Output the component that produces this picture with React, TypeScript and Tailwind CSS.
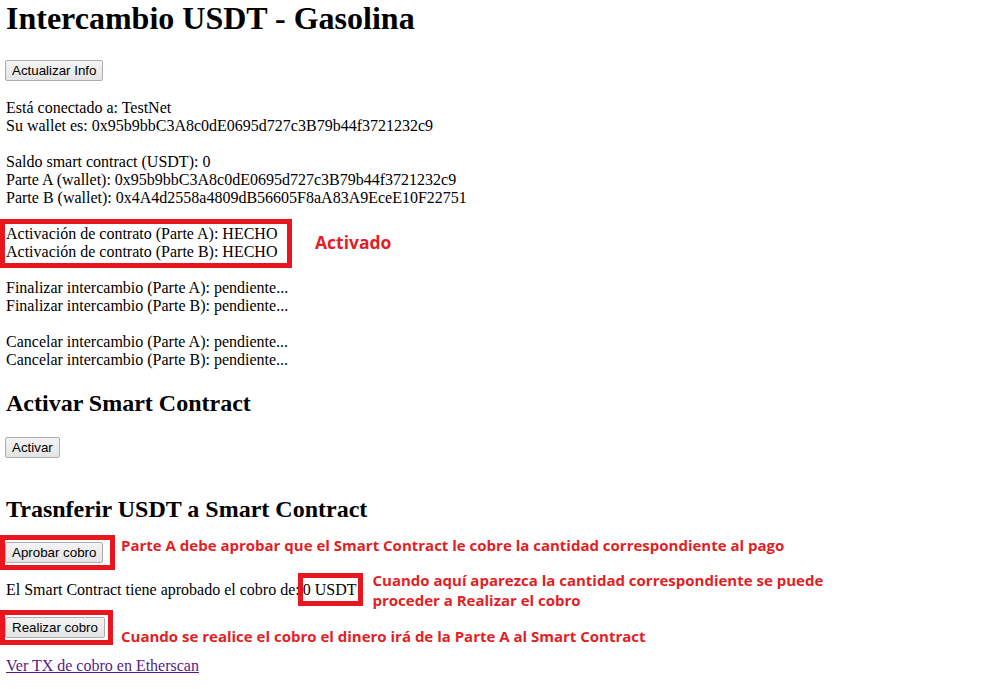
import React from 'react'

const btn =
  "h-[21px] px-[6px] border border-[#adadad] rounded-[2px] bg-gradient-to-b from-[#f4f4f4] to-[#e4e4e4] font-['Liberation_Sans',Arial,sans-serif] text-[13.33px] leading-[15px] text-black"

const note = "font-['Open_Sans',sans-serif] font-bold text-[15px] leading-[20px] text-[#e31e24] whitespace-nowrap"
const red = 'border-[5px] border-[#e8161f]'

export default function App() {
  return (
    <div className="flex w-[985px] min-h-[689px] flex-col items-start bg-white pl-[5px] text-black font-['Liberation_Serif','Times_New_Roman',serif] text-[16px] leading-[18px]">
      <h1 className="pl-px text-[32px] font-bold leading-[37px]">Intercambio USDT - Gasolina</h1>

      <button className={`${btn} mt-[23px]`}>Actualizar Info</button>

      <div className="mt-[18px] pl-px">
        Está conectado a: TestNet
        <br />
        Su wallet es: 0x95b9bbC3A8c0dE0695d727c3B79b44f3721232c9
        <br />
        <br />
        Saldo smart contract (USDT): 0
        <br />
        Parte A (wallet): 0x95b9bbC3A8c0dE0695d727c3B79b44f3721232c9
        <br />
        Parte B (wallet): 0x4A4d2558a4809dB56605F8aA83A9EceE10F22751
      </div>

      {/* Activado */}
      <div className="mt-[12px] -ml-[5px] flex items-center">
        <div className={`${red} w-[292px] pl-px pt-px pb-[2px]`}>
          Activación de contrato (Parte A): HECHO
          <br />
          Activación de contrato (Parte B): HECHO
        </div>
        <div className={`${note} ml-[23px] -mt-[3px] text-[17.5px]`}>Activado</div>
      </div>

      <div className="mt-[11px] pl-px">
        Finalizar intercambio (Parte A): pendiente...
        <br />
        Finalizar intercambio (Parte B): pendiente...
        <br />
        <br />
        Cancelar intercambio (Parte A): pendiente...
        <br />
        Cancelar intercambio (Parte B): pendiente...
      </div>

      <h2 className="mt-[20px] pl-px text-[24px] font-bold leading-[28px]">Activar Smart Contract</h2>
      <button className={`${btn} mt-[20px]`}>Activar</button>

      <h2 className="mt-[37px] pl-px text-[24px] font-bold leading-[28px]">Trasnferir USDT a Smart Contract</h2>

      {/* Aprobar cobro */}
      <div className="mt-[12px] -ml-[5px] flex items-start">
        <div className={`${red} w-[115px] py-[2px]`}>
          <button className={btn}>Aprobar cobro</button>
        </div>
        <div className={`${note} ml-[6px]`}>
          Parte A debe aprobar que el Smart Contract le cobre la cantidad correspondiente al pago
        </div>
      </div>

      <div className="flex items-start">
        <div className="mt-[11px] pl-px">
          El Smart Contract tiene aprobado el cobro de:
          <span className={`${red} -ml-[2px] inline-block pr-[2px] pt-[3px] pb-[2px] -my-[8px] leading-[18px]`}>0 USDT</span>
        </div>
        <div className={`${note} ml-[9px]`}>
          Cuando aquí aparezca la cantidad correspondiente se puede
          <br />
          proceder a Realizar el cobro
        </div>
      </div>

      {/* Realizar cobro */}
      <div className="-ml-[5px] flex items-start">
        <div className={`${red} w-[113px] py-[2px]`}>
          <button className={btn}>Realizar cobro</button>
        </div>
        <div className={`${note} ml-[8px] mt-[16px]`}>
          Cuando se realice el cobro el dinero irá de la Parte A al Smart Contract
        </div>
      </div>

      <a href="#" className="mt-[11px] pl-px text-[#551a8b] underline">
        Ver TX de cobro en Etherscan
      </a>
    </div>
  )
}
